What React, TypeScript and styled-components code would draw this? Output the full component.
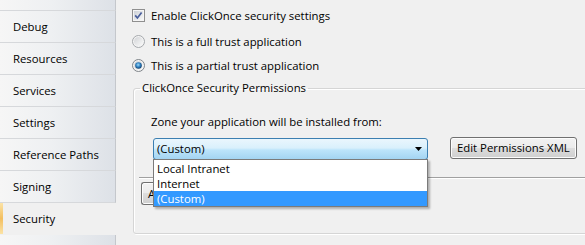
import React from "react";
import styled, { createGlobalStyle } from "styled-components";

const Global = createGlobalStyle`
  *, *::before, *::after { box-sizing: border-box; }
  html, body { margin: 0; padding: 0; background: #f0f0f0; }
  body {
    font-family: "Open Sans", "Noto Sans", sans-serif;
    font-size: 11.35px;
    line-height: 16px;
    color: #000;
  }
`;

const Window = styled.div`
  display: flex;
  width: 585px;
  height: 245px;
  overflow: hidden;
  background: #f0f0f0;
`;

const Sidebar = styled.nav`
  display: flex;
  flex-direction: column;
  width: 116px;
  flex: none;
`;

const Tab = styled.div<{ $selected?: boolean; $height?: number }>`
  flex: none;
  height: ${(p) => p.$height ?? 32}px;
  display: flex;
  align-items: center;
  padding-left: ${(p) => (p.$selected ? 10 : 13)}px;
  padding-top: 1px;
  border-bottom: 1px solid ${(p) => (p.$selected ? "#cfd2d6" : "#d6d8db")};
  ${(p) =>
    p.$selected
      ? `
    background: #f0f0f0;
    border-left: 3px solid #f5c66c;
    border-image: linear-gradient(#fbe3a6, #f3bf60 50%, #fbe3a6) 1;
    border-image-slice: 0 0 0 1;
    border-right: none;
  `
      : `
    background: linear-gradient(to right, #f6f6f6 0%, #eef0f2 45%, #dde1e7 100%);
    border-right: 1px solid #c4c7cc;
  `}
`;

const Content = styled.main`
  flex: 1;
  display: flex;
  flex-direction: column;
  padding-left: 16px;
  min-width: 0;
`;

const OptionRow = styled.label<{ $top: number }>`
  display: flex;
  align-items: center;
  gap: 6px;
  height: 17px;
  margin-top: ${(p) => p.$top}px;
  white-space: nowrap;
`;

const Mark = styled.svg`
  flex: none;
  display: block;
`;

const GroupBox = styled.fieldset`
  flex: none;
  width: 500px;
  height: 154px;
  margin: 6px 0 0 1px;
  padding: 0 0 0 6px;
  border: 1px solid #d5d5d5;
  border-radius: 3px;
  box-shadow: 1px 1px 0 #ffffff, inset 1px 1px 0 #ffffff;
  display: flex;
  flex-direction: column;
  min-width: 0;
`;

const GroupTitle = styled.legend`
  padding: 0 2px;
  margin: 0;
  line-height: 16px;
  white-space: nowrap;
`;

const ZoneLabel = styled.div`
  margin: 18px 0 0 11px;
  white-space: nowrap;
`;

const ZoneRow = styled.div`
  display: flex;
  align-items: flex-start;
  margin-top: 7px;
  padding-left: 13px;
`;

const ComboWrap = styled.div`
  position: relative;
  flex: none;
  margin-top: 1px;
`;

const Combo = styled.div`
  width: 275px;
  height: 22px;
  display: flex;
  align-items: center;
  justify-content: space-between;
  padding: 0 5px 0 3px;
  border: 1px solid #3c7fb1;
  border-radius: 3px;
  background: linear-gradient(#eaf6fd 0%, #d9f0fc 45%, #bce4fb 55%, #a3d4f2 100%);
  white-space: nowrap;
`;

const Popup = styled.ul`
  position: absolute;
  top: 21px;
  left: 0;
  width: 275px;
  margin: 0;
  padding: 1px 0 0;
  list-style: none;
  background: #fff;
  border: 1px solid #7b7b7b;
  box-shadow: 2px 2px 2px rgba(0, 0, 0, 0.28);
  z-index: 2;
`;

const PopupItem = styled.li<{ $active?: boolean }>`
  height: 15px;
  line-height: 15px;
  padding-left: 3px;
  white-space: nowrap;
  background: ${(p) => (p.$active ? "#3399ff" : "transparent")};
  color: ${(p) => (p.$active ? "#fff" : "#000")};
`;

const Button = styled.button<{ $width: number; $height?: number }>`
  flex: none;
  width: ${(p) => p.$width}px;
  height: ${(p) => p.$height ?? 22}px;
  padding: 0 6px;
  font: inherit;
  color: #000;
  text-align: left;
  border: 1px solid #707070;
  border-radius: 3px;
  background: linear-gradient(#f2f2f2 0%, #ebebeb 50%, #dddddd 50%, #cfcfcf 100%);
  box-shadow: inset 0 0 0 1px #fcfcfc;
  white-space: nowrap;
  overflow: hidden;
`;

const EditButton = styled(Button)`
  margin-left: 22px;
`;

const Separator = styled.div`
  flex: none;
  width: 520px;
  height: 2px;
  margin: 17px 0 0 -1px;
  border-top: 1px solid #a0a0a0;
  border-bottom: 1px solid #ffffff;
`;

const AdvancedButton = styled(Button)`
  margin: 3px 0 0 1px;
  padding: 0 0 0 6px;
  border-right: none;
  border-top-right-radius: 0;
  border-bottom-right-radius: 0;
`;

const CheckBox = () => (
  <Mark width="13" height="13" viewBox="0 0 13 13">
    <defs>
      <linearGradient id="cbFill" x1="0" y1="0" x2="1" y2="1">
        <stop offset="0" stopColor="#cdd1d7" />
        <stop offset="1" stopColor="#f8f8f8" />
      </linearGradient>
    </defs>
    <rect x="0.5" y="0.5" width="12" height="12" fill="#f5f5f5" stroke="#8f8f8f" />
    <rect x="2" y="2" width="9" height="9" fill="url(#cbFill)" />
    <path d="M3.2 6.4 L5.4 9 L9.6 3.4" fill="none" stroke="#4a5f9c" strokeWidth="1.7" />
  </Mark>
);

const Radio = ({ checked }: { checked?: boolean }) => (
  <Mark width="13" height="13" viewBox="0 0 13 13">
    <defs>
      <linearGradient id="rdFill" x1="0" y1="0" x2="1" y2="1">
        <stop offset="0" stopColor="#d2d4d7" />
        <stop offset="1" stopColor="#fafafa" />
      </linearGradient>
      <radialGradient id="rdDot" cx="0.45" cy="0.4" r="0.6">
        <stop offset="0" stopColor="#9fdcfb" />
        <stop offset="0.55" stopColor="#2e7fc0" />
        <stop offset="1" stopColor="#133e68" />
      </radialGradient>
    </defs>
    <circle cx="6.5" cy="6.5" r="6" fill="#f4f4f4" stroke={checked ? "#7f8489" : "#a5a8ac"} />
    <circle cx="6.5" cy="6.5" r="4.5" fill="url(#rdFill)" />
    {checked && <circle cx="6.5" cy="6.5" r="3.3" fill="url(#rdDot)" />}
  </Mark>
);

const Arrow = () => (
  <Mark width="7" height="4" viewBox="0 0 7 4">
    <polygon points="0,0 7,0 3.5,4" fill="#000" />
  </Mark>
);

const tabs = ["Debug", "Resources", "Services", "Settings", "Reference Paths", "Signing", "Security", ""];

export default function App() {
  return (
    <>
      <Global />
      <Window>
        <Sidebar>
          <Tab $height={11} />
          {tabs.map((t) => (
            <Tab key={t || "more"} $selected={t === "Security"}>
              {t}
            </Tab>
          ))}
        </Sidebar>
        <Content>
          <OptionRow $top={7}>
            <CheckBox />
            Enable ClickOnce security settings
          </OptionRow>
          <OptionRow $top={9}>
            <Radio />
            This is a full trust application
          </OptionRow>
          <OptionRow $top={7}>
            <Radio checked />
            This is a partial trust application
          </OptionRow>
          <GroupBox>
            <GroupTitle>ClickOnce Security Permissions</GroupTitle>
            <ZoneLabel>Zone your application will be installed from:</ZoneLabel>
            <ZoneRow>
              <ComboWrap>
                <Combo>
                  <span>(Custom)</span>
                  <Arrow />
                </Combo>
                <Popup>
                  <PopupItem>Local Intranet</PopupItem>
                  <PopupItem>Internet</PopupItem>
                  <PopupItem $active>(Custom)</PopupItem>
                </Popup>
              </ComboWrap>
              <EditButton $width={127}>Edit Permissions XML</EditButton>
            </ZoneRow>
            <Separator />
            <AdvancedButton $width={13} $height={23}>
              A
            </AdvancedButton>
          </GroupBox>
        </Content>
      </Window>
    </>
  );
}
